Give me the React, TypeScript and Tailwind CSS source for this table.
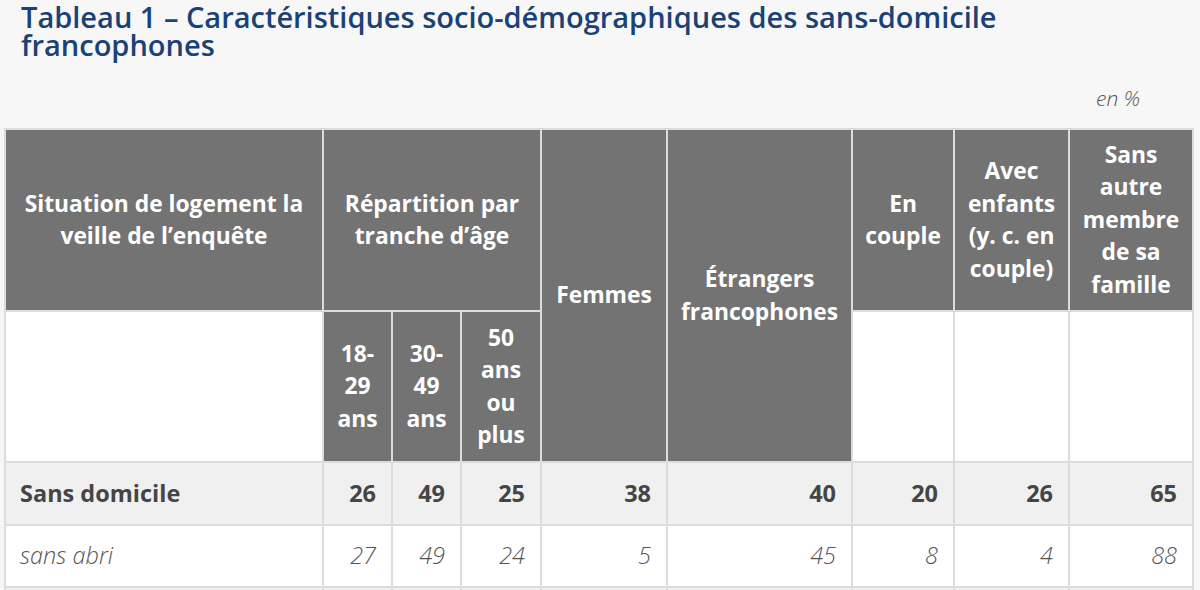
import React from "react";

const H = "bg-[#737373] text-white font-bold text-[22.8px] leading-[32.5px] text-center align-middle px-[10px] py-0 border-2 border-[#dcdcdc]";
const E = "bg-white border-2 border-[#dcdcdc]";
const B = "text-right pr-[15px] pl-[10px] border-2 border-[#dcdcdc] text-[23.5px] align-middle";

export default function App() {
  const bold = ["26", "49", "25", "38", "40", "20", "26", "65"];
  const ital = ["27", "49", "24", "5", "45", "8", "4", "88"];
  return (
    <div className="min-h-[590px] w-[1200px] bg-[#f7f7f7] font-['Open_Sans',sans-serif] overflow-hidden">
      <h2 className="pt-[3px] pl-[21px] w-[1100px] text-[29px] leading-[28px] font-semibold text-[#1a4275]">
        Tableau 1 – Caractéristiques socio-démographiques des sans-domicile francophones
      </h2>
      <div className="mt-[26px] pr-[60px] text-right text-[21px] leading-[26px] italic font-light text-[#555]">
        en %
      </div>
      <table className="mt-[17px] ml-[4px] w-[1188px] table-fixed border-collapse border-2 border-[#dcdcdc]">
        <colgroup>
          <col className="w-[318px]" />
          <col className="w-[69px]" />
          <col className="w-[69px]" />
          <col className="w-[80px]" />
          <col className="w-[126px]" />
          <col className="w-[185px]" />
          <col className="w-[102px]" />
          <col className="w-[115px]" />
          <col className="w-[124px]" />
        </colgroup>
        <thead>
          <tr className="h-[182px]">
            <th className={H}>Situation de logement la veille de l’enquête</th>
            <th className={H} colSpan={3}>Répartition par tranche d’âge</th>
            <th className={H} rowSpan={2}>Femmes</th>
            <th className={H} rowSpan={2}>Étrangers francophones</th>
            <th className={H}>En couple</th>
            <th className={H}>Avec enfants (y. c. en couple)</th>
            <th className={H}>Sans autre membre de sa famille</th>
          </tr>
          <tr className="h-[151px]">
            <th className={E}></th>
            <th className={H}>18-29 ans</th>
            <th className={H}>30-49 ans</th>
            <th className={H}>50 ans ou plus</th>
            <th className={E}></th>
            <th className={E}></th>
            <th className={E}></th>
          </tr>
        </thead>
        <tbody>
          <tr className="h-[63px] bg-[#f0f0f0] text-[#454545] font-bold">
            <td className="pl-[14px] border-2 border-[#dcdcdc] text-[23.5px] text-left align-middle">Sans domicile</td>
            {bold.map((v, i) => (
              <td key={i} className={B}>{v}</td>
            ))}
          </tr>
          <tr className="h-[62px] bg-white text-[#555] italic font-light">
            <td className="pl-[14px] border-2 border-[#dcdcdc] text-[23.5px] text-left align-middle">sans abri</td>
            {ital.map((v, i) => (
              <td key={i} className={B}>{v}</td>
            ))}
          </tr>
          <tr className="h-[62px] bg-[#f0f0f0]">
            <td className="border-2 border-[#dcdcdc]"></td>
            {ital.map((v, i) => (
              <td key={i} className="border-2 border-[#dcdcdc]"></td>
            ))}
          </tr>
        </tbody>
      </table>
    </div>
  );
}
